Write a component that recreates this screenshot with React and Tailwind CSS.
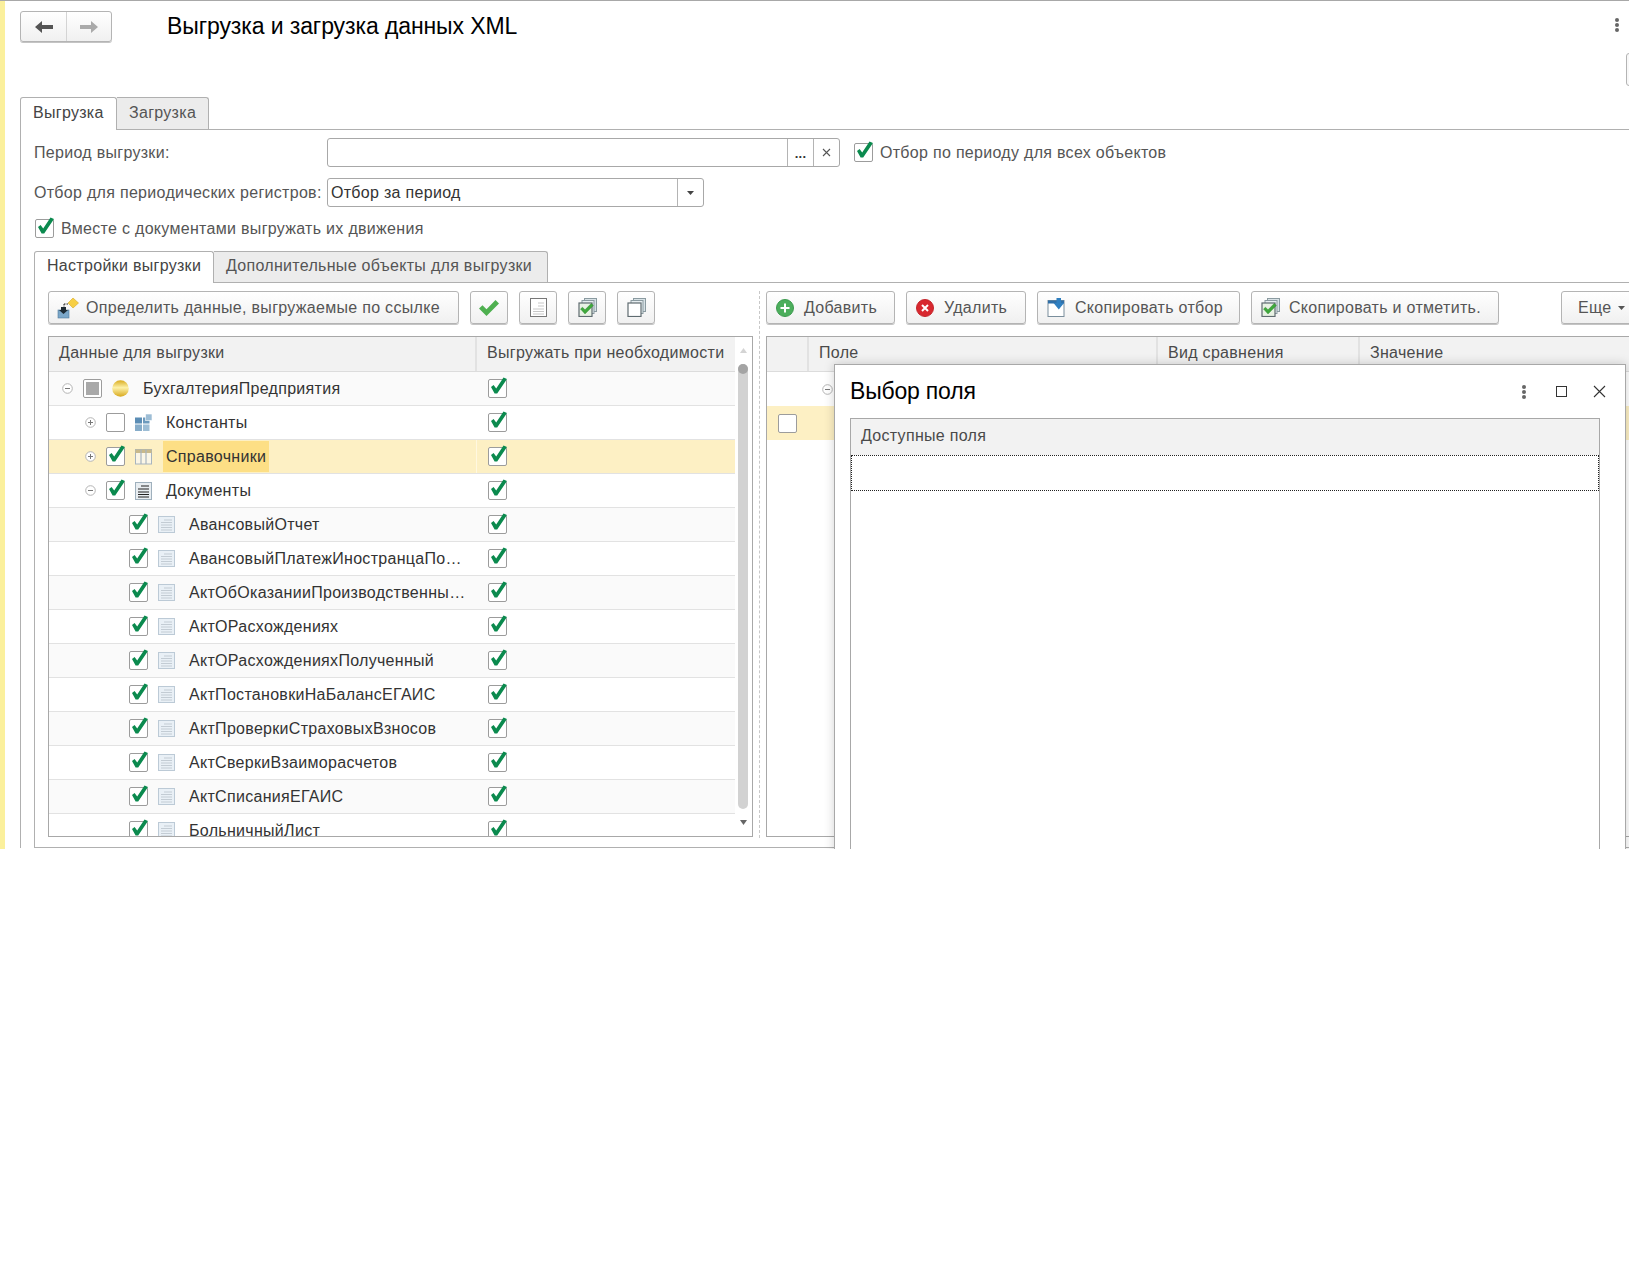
import React from 'react'

const rows = [
  { level: 0, text: 'БухгалтерияПредприятия', exp: 'minus', mark: 'part', icon: 'ball' },
  { level: 1, text: 'Константы', exp: 'plus', mark: 'off', icon: 'const' },
  { level: 1, text: 'Справочники', exp: 'plus', mark: 'on', icon: 'ref', active: true },
  { level: 1, text: 'Документы', exp: 'minus', mark: 'on', icon: 'docs' },
  { level: 2, text: 'АвансовыйОтчет' },
  { level: 2, text: 'АвансовыйПлатежИностранцаПо…' },
  { level: 2, text: 'АктОбОказанииПроизводственны…' },
  { level: 2, text: 'АктОРасхождениях' },
  { level: 2, text: 'АктОРасхожденияхПолученный' },
  { level: 2, text: 'АктПостановкиНаБалансЕГАИС' },
  { level: 2, text: 'АктПроверкиСтраховыхВзносов' },
  { level: 2, text: 'АктСверкиВзаиморасчетов' },
  { level: 2, text: 'АктСписанияЕГАИС' },
  { level: 2, text: 'БольничныйЛист' },
]

const levelPad = ['pl-[13px]', 'pl-[36px]', 'pl-[80px]']

function Expander({ kind }) {
  return (
    <svg width="11" height="11" viewBox="0 0 11 11" className="shrink-0">
      <circle cx="5.5" cy="5.5" r="4.8" fill="#fff" stroke="#b4b4b4" />
      <path d="M3 5.5h5" stroke="#777" />
      {kind === 'plus' && <path d="M5.5 3v5" stroke="#777" />}
    </svg>
  )
}

// checkbox with the green tick poking out of the top right corner
function Check({ mark = 'on' }) {
  return (
    <div className="relative w-[19px] h-[19px] shrink-0 bg-white border border-[#9c9c9c] rounded-[2px]">
      {mark === 'part' && <div className="absolute left-[2px] top-[2px] w-[13px] h-[13px] bg-[#a9a9a9]" />}
      {mark === 'on' && (
        <svg width="20" height="19" viewBox="0 0 20 19" className="absolute left-[-1px] top-[-4px]">
          <path d="M3 11l2.600-2 2.600 3.600L15.500 1.500 19 3 9.200 17.500H6.600z" fill="#0b8a4e" />
        </svg>
      )}
    </div>
  )
}

function DocIcon() {
  return (
    <svg width="17" height="17" viewBox="0 0 17 17">
      <rect x="0.5" y="0.5" width="16" height="16" fill="#e9f0f6" stroke="#bccad6" />
      <path d="M6 4h8M3 6.5h11M3 9h11M3 11.5h11M3 14h11" stroke="#c3ccd4" />
    </svg>
  )
}

function RowIcon({ kind }) {
  if (kind === 'ball') {
    return (
      <svg width="17" height="17" viewBox="0 0 17 17">
        <defs>
          <linearGradient id="ball" x1="0" y1="0" x2="0" y2="1">
            <stop offset="0" stopColor="#d9ab1e" />
            <stop offset="0.45" stopColor="#fdf1a8" />
            <stop offset="1" stopColor="#d8a81c" />
          </linearGradient>
        </defs>
        <circle cx="8.5" cy="8.5" r="8.3" fill="url(#ball)" />
      </svg>
    )
  }
  if (kind === 'const') {
    return (
      <svg width="17" height="17" viewBox="0 0 17 17">
        <rect x="0" y="3.500" width="7" height="6" fill="#5b8db5" />
        <rect x="0" y="10.500" width="7" height="6.500" fill="#86acc9" />
        <rect x="8" y="10.500" width="6.500" height="6.500" fill="#9dbdd5" />
        <rect x="8" y="3.500" width="6.500" height="6" fill="#6d9abd" />
        <rect x="10.500" y="0" width="6.500" height="6.500" fill="#9dbdd5" stroke="#fff" strokeWidth="0.6" />
      </svg>
    )
  }
  if (kind === 'ref') {
    return (
      <svg width="17" height="17" viewBox="0 0 17 17">
        <rect x="0.5" y="1.5" width="16" height="14.5" fill="#fbf6e6" stroke="#a7b4bf" />
        <rect x="0.5" y="1.5" width="16" height="3.5" fill="#c9b98a" />
        <path d="M6 1.5v14.5M11 1.5v14.5" stroke="#a7b4bf" strokeWidth="1.2" />
      </svg>
    )
  }
  if (kind === 'docs') {
    return (
      <svg width="17" height="18" viewBox="0 0 17 18">
        <rect x="0.5" y="0.5" width="16" height="17" fill="#e8edf1" stroke="#9fb0bd" />
        <path d="M6 4h8M3 7h11M3 10h11M3 12.5h11M3 15h11" stroke="#222" strokeWidth="1.2" />
      </svg>
    )
  }
  return <DocIcon />
}

function Btn({ className = '', children }) {
  return (
    <div className={`h-[33px] flex items-center shrink-0 border border-[#b4b4b4] rounded-[3px] bg-linear-to-b from-white to-[#f0f0f0] shadow-[0_1px_0_#c4c4c4] text-[#555] ${className}`}>
      {children}
    </div>
  )
}

function StackIcon({ tick }) {
  return (
    <svg width="19" height="19" viewBox="0 0 19 19">
      <rect x="6.5" y="0.5" width="12" height="13" fill="#d8e2e6" stroke="#8a9aa0" />
      <rect x="4" y="2.5" width="12" height="13" fill="#e6edf0" stroke="#8a9aa0" />
      <rect x="1" y="5" width="13" height="13.5" fill={tick ? '#e8f2e4' : '#fff'} stroke="#5f6b70" strokeWidth="1.2" />
      {tick && <path d="M2.5 11l2-1.8 2.5 2.6 6.2-6.3 2.2 2-8.4 8.4z" fill="#3fa93c" stroke="#2a7d2c" strokeWidth="0.4" />}
    </svg>
  )
}

function HeadCell({ className = '', children }) {
  return (
    <div className={`h-full flex items-center shrink-0 pb-[2px] bg-[#f2f2f2] border-r-2 border-[#e2e2e2] text-[#4a4a4a] ${className}`}>
      {children}
    </div>
  )
}

function TreeRow({ row, index }) {
  const zebra = row.active ? 'bg-[#fdf0c4]' : index % 2 === 0 ? 'bg-[#fafafa]' : 'bg-white'
  return (
    <div className={`h-[34px] shrink-0 flex border-b border-[#e2e2e2] ${zebra}`}>
      <div className={`w-[428px] shrink-0 flex items-center text-[#333] border-r border-transparent ${levelPad[row.level]} ${row.active ? 'border-r-[#fff8e0]' : ''}`}>
        {row.exp && (
          <div className="w-[11px] mr-[10px] shrink-0">
            <Expander kind={row.exp} />
          </div>
        )}
        <Check mark={row.mark} />
        <div className="w-[17px] ml-[10px] shrink-0">
          <RowIcon kind={row.icon} />
        </div>
        {row.active ? (
          <span className="ml-[11px] px-[3px] h-[31px] flex items-center bg-[#fddf85]">{row.text}</span>
        ) : (
          <span className="ml-[14px] whitespace-nowrap">{row.text}</span>
        )}
      </div>
      <div className="flex-1 flex items-center pl-[11px]">
        <Check />
      </div>
    </div>
  )
}

export default function App() {
  return (
    <div className="w-[1629px] h-[1282px] bg-white overflow-hidden text-[16px] tracking-[0.3px] font-['Liberation_Sans',Arial,sans-serif]">
      <div className="relative h-[849px] flex border-t border-[#a8a8a8] overflow-hidden">
        <div className="w-[5px] shrink-0 bg-[#fbf09c]" />

        <div className="w-[1624px] shrink-0 pl-[15px] pt-[10px]">
          {/* page header */}
          <div className="h-[86px] flex items-start">
            <div className="w-[92px] h-[31px] flex shrink-0 border border-[#b4b4b4] rounded-[3px] bg-linear-to-b from-white to-[#f0f0f0] shadow-[0_1px_0_#c4c4c4]">
              <div className="w-[46px] flex items-center justify-center border-r border-[#d4d4d4]">
                <svg width="18" height="14" viewBox="0 0 18 14">
                  <path d="M0 7l7-6v4h11v4H7v4z" fill="#555" />
                </svg>
              </div>
              <div className="flex-1 flex items-center justify-center">
                <svg width="18" height="14" viewBox="0 0 18 14">
                  <path d="M18 7l-7-6v4H0v4h11v4z" fill="#aaa" />
                </svg>
              </div>
            </div>
            <h1 className="ml-[55px] mt-[1px] text-[23px] tracking-[-0.1px] leading-[28px] text-black whitespace-nowrap">Выгрузка и загрузка данных XML</h1>
            <div className="ml-auto w-[14px] shrink-0">
              <div className="mt-[7px] w-[4px] flex flex-col gap-[1px]">
                <div className="w-[4px] h-[4px] rounded-full bg-[#666]" />
                <div className="w-[4px] h-[4px] rounded-full bg-[#666]" />
                <div className="w-[4px] h-[4px] rounded-full bg-[#666]" />
              </div>
              <div className="mt-[21px] ml-[11px] w-[30px] h-[33px] border border-[#b4b4b4] rounded-[3px] bg-[#f8f8f8]" />
            </div>
          </div>

          {/* outer tabs */}
          <div className="flex h-[33px] border-b border-[#b0b0b0]">
            <div className="w-[97px] h-[33px] pl-[12px] pb-[2px] flex items-center bg-white border border-b-0 border-[#b0b0b0] rounded-t-[3px] text-[#444]">Выгрузка</div>
            <div className="w-[92px] h-[32px] pl-[12px] pb-[1px] flex items-center bg-[#ececec] border border-l-0 border-b-0 border-[#b0b0b0] rounded-tr-[3px] text-[#555]">Загрузка</div>
          </div>

          <div className="border-l border-[#b0b0b0] pl-[13px] pt-[8px]">
            <div className="flex items-center h-[29px]">
              <div className="w-[293px] shrink-0 text-[#555]">Период выгрузки:</div>
              <div className="w-[513px] h-[29px] flex shrink-0 border border-[#a8a8a8] rounded-[3px] bg-white">
                <div className="flex-1" />
                <div className="w-[26px] border-l border-[#b4b4b4] flex items-center justify-center text-[#333] font-bold text-[13px] pt-[3px]">...</div>
                <div className="w-[26px] border-l border-[#b4b4b4] flex items-center justify-center">
                  <svg width="9" height="9" viewBox="0 0 9 9">
                    <path d="M1 1l7 7M8 1L1 8" stroke="#555" strokeWidth="1.1" />
                  </svg>
                </div>
              </div>
              <div className="ml-[14px]"><Check /></div>
              <div className="ml-[7px] text-[#555] whitespace-nowrap">Отбор по периоду для всех объектов</div>
            </div>

            <div className="flex items-center h-[29px] mt-[11px]">
              <div className="w-[293px] shrink-0 text-[#555] whitespace-nowrap">Отбор для периодических регистров:</div>
              <div className="w-[377px] h-[29px] flex shrink-0 border border-[#a8a8a8] rounded-[3px] bg-white">
                <div className="flex-1 pl-[3px] flex items-center text-[#333]">Отбор за период</div>
                <div className="w-[26px] border-l border-[#b4b4b4] flex items-center justify-center">
                  <svg width="7" height="4" viewBox="0 0 7 4"><path d="M0 0h7L3.500 4z" fill="#444" /></svg>
                </div>
              </div>
            </div>

            <div className="flex items-center h-[19px] mt-[12px] pl-[1px]">
              <Check />
              <div className="ml-[7px] text-[#555] whitespace-nowrap">Вместе с документами выгружать их движения</div>
            </div>

            {/* inner tabs */}
            <div className="flex h-[32px] mt-[13px] border-b border-[#b0b0b0]">
              <div className="w-[180px] h-[32px] pl-[12px] pb-[3px] flex items-center bg-white border border-b-0 border-[#b0b0b0] rounded-t-[3px] text-[#444] whitespace-nowrap">Настройки выгрузки</div>
              <div className="w-[334px] h-[31px] pl-[12px] pb-[2px] flex items-center bg-[#ececec] border border-l-0 border-b-0 border-[#b0b0b0] rounded-tr-[3px] text-[#555] whitespace-nowrap">Дополнительные объекты для выгрузки</div>
            </div>

            <div className="flex h-[565px] border-l border-b border-[#b0b0b0] pl-[13px] pt-[8px] pb-[9px]">
              {/* left side */}
              <div className="w-[705px] shrink-0 flex flex-col">
                <div className="flex h-[33px]">
                  <Btn className="w-[411px] pl-[8px]">
                    <svg width="22" height="22" viewBox="0 0 22 22">
                      <path d="M7 7h5M7 7v4" stroke="#222" strokeDasharray="1.5 1" />
                      <path d="M16 1l5.5 5-5.5 5-5-5z" fill="#f7cf44" stroke="#d9a91e" strokeWidth="0.6" />
                      <rect x="1" y="13" width="11" height="8" fill="#7ba7c9" stroke="#4f7a9c" strokeWidth="0.6" />
                      <path d="M4 10h5v3h2l-4.500 4-4.500-4h2z" fill="#1d2a33" />
                    </svg>
                    <span className="ml-[7px] whitespace-nowrap">Определить данные, выгружаемые по ссылке</span>
                  </Btn>
                  <Btn className="w-[38px] ml-[11px] justify-center">
                    <svg width="20" height="16" viewBox="0 0 20 16">
                      <path d="M0 8.500l3.500-3.200 4 4L16.500 0 20 3.500 7.500 16z" fill="#4fb050" />
                    </svg>
                  </Btn>
                  <Btn className="w-[38px] ml-[11px] justify-center">
                    <svg width="17" height="19" viewBox="0 0 17 19">
                      <rect x="0.500" y="0.500" width="16" height="18" fill="#fff" stroke="#777" />
                      <path d="M8 5h6M8 8h6M3 11h11M3 13.500h11M3 16h11" stroke="#c8c8c8" />
                    </svg>
                  </Btn>
                  <Btn className="w-[38px] ml-[11px] justify-center"><StackIcon tick /></Btn>
                  <Btn className="w-[38px] ml-[11px] justify-center"><StackIcon /></Btn>
                </div>

                <div className="mt-[12px] h-[501px] flex border border-[#a8a8a8] overflow-hidden">
                  <div className="w-[686px] shrink-0 flex flex-col overflow-hidden">
                    <div className="h-[35px] shrink-0 flex border-b border-[#dcdcdc]">
                      <HeadCell className="w-[428px] pl-[10px]">Данные для выгрузки</HeadCell>
                      <div className="flex-1 h-full flex items-center pl-[10px] pb-[2px] bg-[#f2f2f2] text-[#4a4a4a] whitespace-nowrap">Выгружать при необходимости</div>
                    </div>
                    {rows.map((row, i) => (
                      <TreeRow key={row.text} row={row} index={i} />
                    ))}
                  </div>
                  {/* scrollbar */}
                  <div className="flex-1 flex flex-col items-center pt-[11px] pr-[1px]">
                    <svg width="7" height="5" viewBox="0 0 7 5"><path d="M0 5h7L3.500 0z" fill="#d4d4d4" /></svg>
                    <div className="mt-[11px] w-[10px] h-[445px] shrink-0 rounded-full bg-[#d2d2d2]">
                      <div className="w-[10px] h-[10px] rounded-full bg-[#a4a4a4]" />
                    </div>
                    <svg className="mt-[11px]" width="7" height="5" viewBox="0 0 7 5"><path d="M0 0h7L3.500 5z" fill="#666" /></svg>
                  </div>
                </div>
              </div>

              <div className="ml-[6px] w-0 h-full border-l border-dashed border-[#c8c8c8] shrink-0" />

              {/* right side */}
              <div className="ml-[6px] w-[880px] shrink-0 flex flex-col">
                <div className="flex h-[33px]">
                  <Btn className="w-[129px] pl-[9px]">
                    <svg width="18" height="18" viewBox="0 0 18 18">
                      <circle cx="9" cy="9" r="8.500" fill="#4cae5c" stroke="#3c9a4e" />
                      <path d="M9 4.500v9M4.500 9h9" stroke="#fff" strokeWidth="2" />
                    </svg>
                    <span className="ml-[10px]">Добавить</span>
                  </Btn>
                  <Btn className="w-[120px] ml-[11px] pl-[9px]">
                    <svg width="18" height="18" viewBox="0 0 18 18">
                      <circle cx="9" cy="9" r="8.500" fill="#d8282f" stroke="#c4262c" />
                      <path d="M6 6l6 6M12 6l-6 6" stroke="#fff" strokeWidth="2" />
                    </svg>
                    <span className="ml-[10px]">Удалить</span>
                  </Btn>
                  <Btn className="w-[203px] ml-[11px] pl-[9px]">
                    <svg width="19" height="19" viewBox="0 0 19 19">
                      <rect x="1" y="2.500" width="16" height="16" fill="#fff" stroke="#7a8e9c" />
                      <rect x="1" y="2.500" width="16" height="3" fill="#2f6fa8" />
                      <path d="M9.500 0h4.500v5h3l-5.200 6.500L6.500 5h3z" fill="#2f7fc0" />
                    </svg>
                    <span className="ml-[9px] whitespace-nowrap">Скопировать отбор</span>
                  </Btn>
                  <Btn className="w-[248px] ml-[11px] pl-[9px]">
                    <StackIcon tick />
                    <span className="ml-[9px] whitespace-nowrap">Скопировать и отметить.</span>
                  </Btn>
                  <Btn className="w-[80px] ml-[62px] pl-[16px]">
                    <span>Еще</span>
                    <svg className="ml-[7px]" width="7" height="4" viewBox="0 0 7 4"><path d="M0 0h7L3.500 4z" fill="#555" /></svg>
                  </Btn>
                </div>

                <div className="mt-[12px] h-[501px] border-l border-t border-b border-[#a8a8a8] flex flex-col">
                  <div className="h-[35px] shrink-0 flex border-b border-[#dcdcdc]">
                    <HeadCell className="w-[42px]" />
                    <HeadCell className="w-[349px] pl-[10px]">Поле</HeadCell>
                    <HeadCell className="w-[202px] pl-[10px]">Вид сравнения</HeadCell>
                    <div className="flex-1 h-full flex items-center pl-[10px] pb-[2px] bg-[#f2f2f2] text-[#4a4a4a]">Значение</div>
                  </div>
                  <div className="h-[34px] shrink-0 flex items-center pl-[55px]">
                    <Expander kind="minus" />
                  </div>
                  <div className="h-[34px] shrink-0 flex items-center pl-[11px] bg-[#fdf0c4]">
                    <Check mark="off" />
                  </div>
                </div>
              </div>
            </div>
          </div>
        </div>

        {/* field picker dialog over the page */}
        <div className="absolute left-[834px] top-[363px] w-[792px] h-[600px] pl-[15px] pr-[25px] bg-white border border-[#a8a8a8] shadow-[0_0_10px_rgba(0,0,0,0.18)]">
          <div className="h-[53px] flex items-center">
            <div className="text-[23px] tracking-[-0.2px] leading-[28px] text-black pb-[1px]">Выбор поля</div>
            <div className="ml-auto w-[4px] flex flex-col gap-[1px]">
              <div className="w-[4px] h-[4px] rounded-full bg-[#666]" />
              <div className="w-[4px] h-[4px] rounded-full bg-[#666]" />
              <div className="w-[4px] h-[4px] rounded-full bg-[#666]" />
            </div>
            <div className="ml-[30px] w-[11px] h-[11px] border border-[#333]" />
            <svg className="ml-[26px] mr-[-6px]" width="13" height="13" viewBox="0 0 13 13">
              <path d="M1 1l11 11M12 1L1 12" stroke="#333" strokeWidth="1.1" />
            </svg>
          </div>
          <div className="h-[520px] border border-[#a8a8a8]">
            <div className="h-[36px] pl-[10px] pb-[2px] flex items-center bg-[#f2f2f2] text-[#4a4a4a]">Доступные поля</div>
            <div className="h-[36px] border border-dotted border-[#222]" />
          </div>
        </div>
      </div>
    </div>
  )
}
